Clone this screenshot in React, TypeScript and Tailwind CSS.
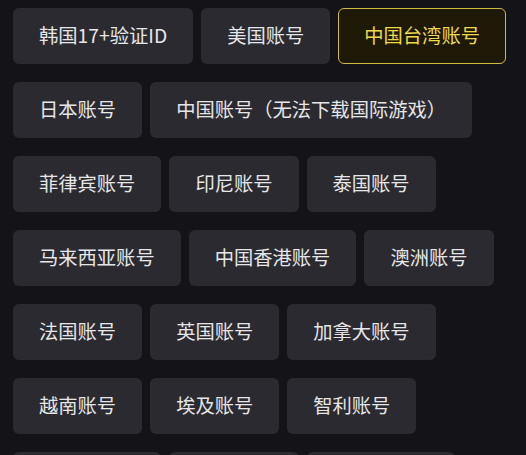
import { useState } from 'react';
import { clsx } from 'clsx';

const regions = [
  '韩国17+验证ID',
  '美国账号',
  '中国台湾账号',
  '日本账号',
  '中国账号（无法下载国际游戏）',
  '菲律宾账号',
  '印尼账号',
  '泰国账号',
  '马来西亚账号',
  '中国香港账号',
  '澳洲账号',
  '法国账号',
  '英国账号',
  '加拿大账号',
  '越南账号',
  '埃及账号',
  '智利账号',
  '新加坡账号',
  '德国账号',
  '意大利账号',
];

export default function App() {
  const [selected, setSelected] = useState('中国台湾账号');

  return (
    <div
      className="min-h-screen bg-[#141317] pl-[13px] pr-3 pt-2"
      style={{ fontFamily: '"Noto Sans CJK SC", "Noto Sans", sans-serif' }}
    >
      <div className="flex flex-wrap gap-x-2 gap-y-[18px]">
        {regions.map((name) => (
          <button
            key={name}
            onClick={() => setSelected(name)}
            className={clsx(
              'h-[56px] rounded-[6px] border px-[25px] text-[19.3px] leading-none whitespace-nowrap',
              selected === name
                ? 'border-[#cdbb48] bg-[#1d1906] text-[#eed94e]'
                : 'border-transparent bg-[#2b2a30] text-[#e6e6e8]'
            )}
          >
            {name}
          </button>
        ))}
      </div>
    </div>
  );
}
